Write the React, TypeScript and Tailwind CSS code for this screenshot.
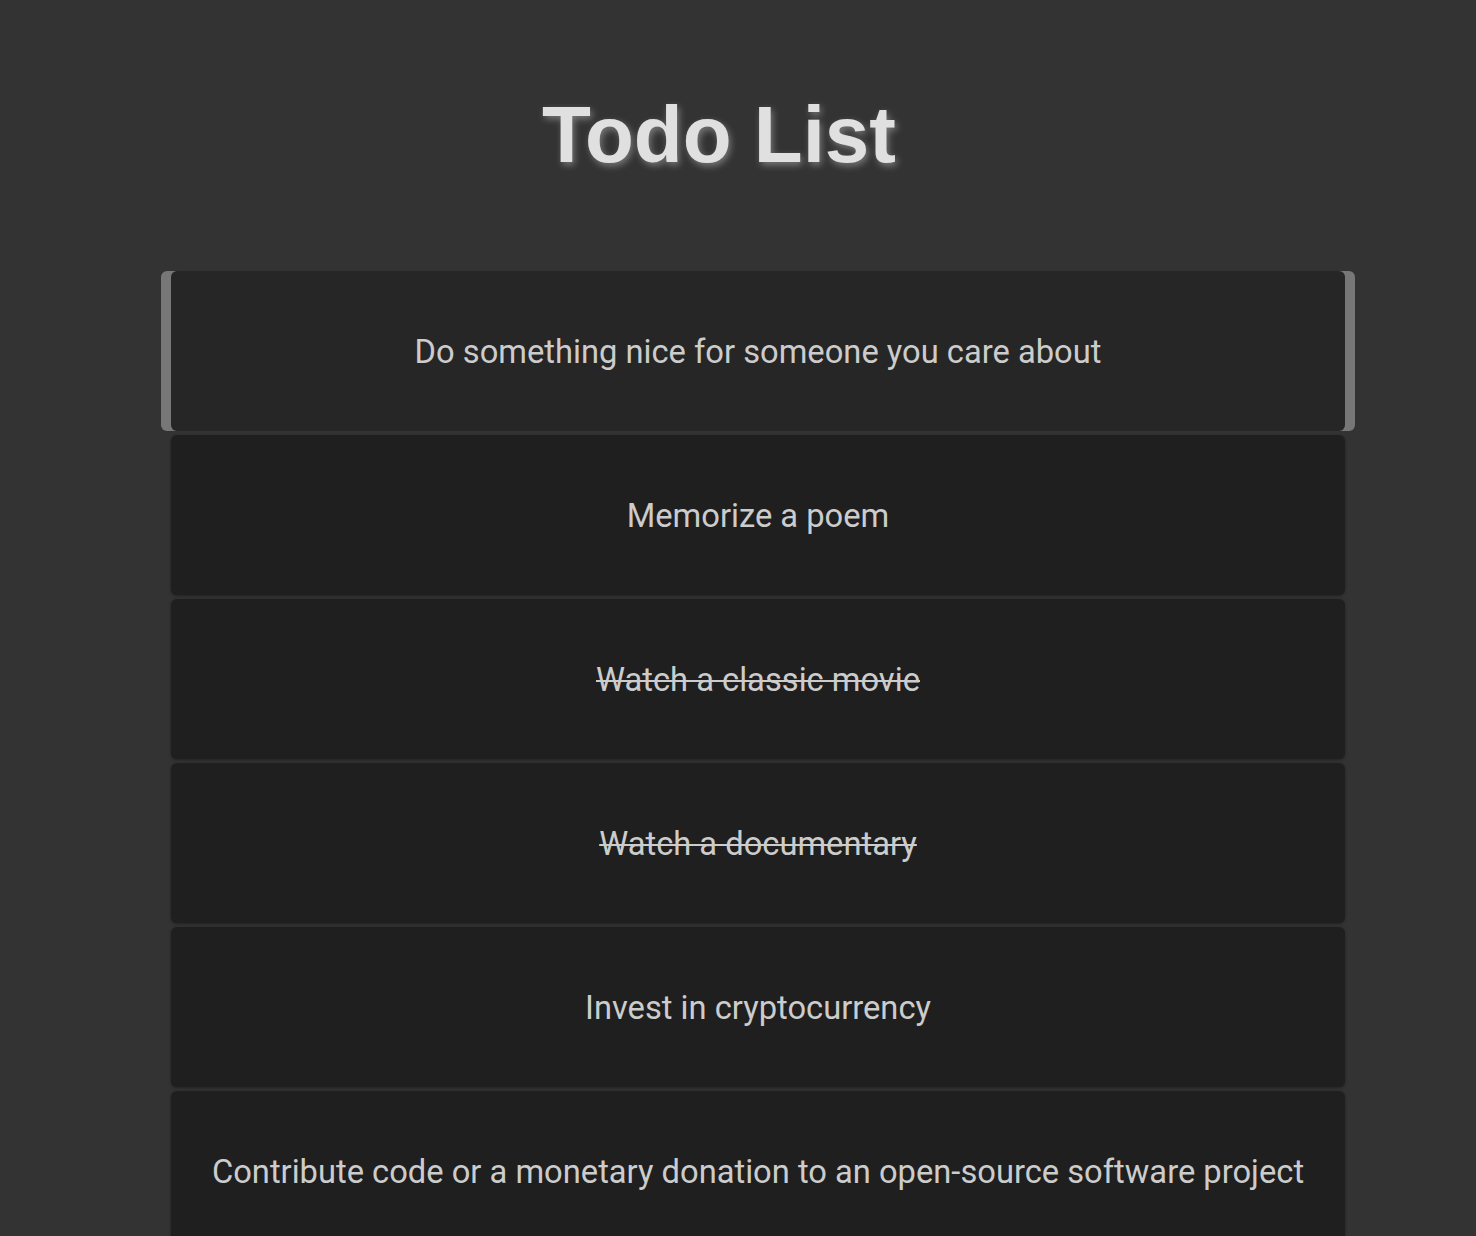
import React from "react";

const todos = [
  { text: "Do something nice for someone you care about", done: false, active: true },
  { text: "Memorize a poem", done: false },
  { text: "Watch a classic movie", done: true },
  { text: "Watch a documentary", done: true },
  { text: "Invest in cryptocurrency", done: false },
  { text: "Contribute code or a monetary donation to an open-source software project", done: false },
];

export default function App() {
  return (
    <div className="min-h-[1236px] bg-[#333333] overflow-hidden">
      <div className="flex justify-center pr-[38px] pt-[95px]">
        <h1 className="font-['Liberation_Sans',Arial,sans-serif] font-bold text-[80px] leading-none text-[#e0e0e0] [text-shadow:2px_3px_7px_rgba(255,255,255,0.35)]">
          Todo List
        </h1>
      </div>
      <div className="mt-[96px] pl-[171px] pr-[131px] flex flex-col gap-[4px]">
        {todos.map((t, i) =>
          t.active ? (
            <div key={i} className="-mx-[10px] px-[10px] bg-[#777777] rounded-md">
              <div className="h-[160px] pt-[4px] rounded-md bg-[#262626] flex items-center justify-center">
                <span className="font-['Roboto',sans-serif] text-[32.7px] text-[#cccccc]">{t.text}</span>
              </div>
            </div>
          ) : (
            <div
              key={i}
              className="h-[160px] pt-[4px] rounded-md bg-[#1f1f1f] shadow-[0_1px_3px_rgba(0,0,0,0.35)] flex items-center justify-center"
            >
              <span
                className={
                  "font-['Roboto',sans-serif] text-[32.7px] text-[#cccccc]" +
                  (t.done ? " line-through decoration-[#cccccc] decoration-2" : "")
                }
              >
                {t.text}
              </span>
            </div>
          )
        )}
      </div>
    </div>
  );
}
